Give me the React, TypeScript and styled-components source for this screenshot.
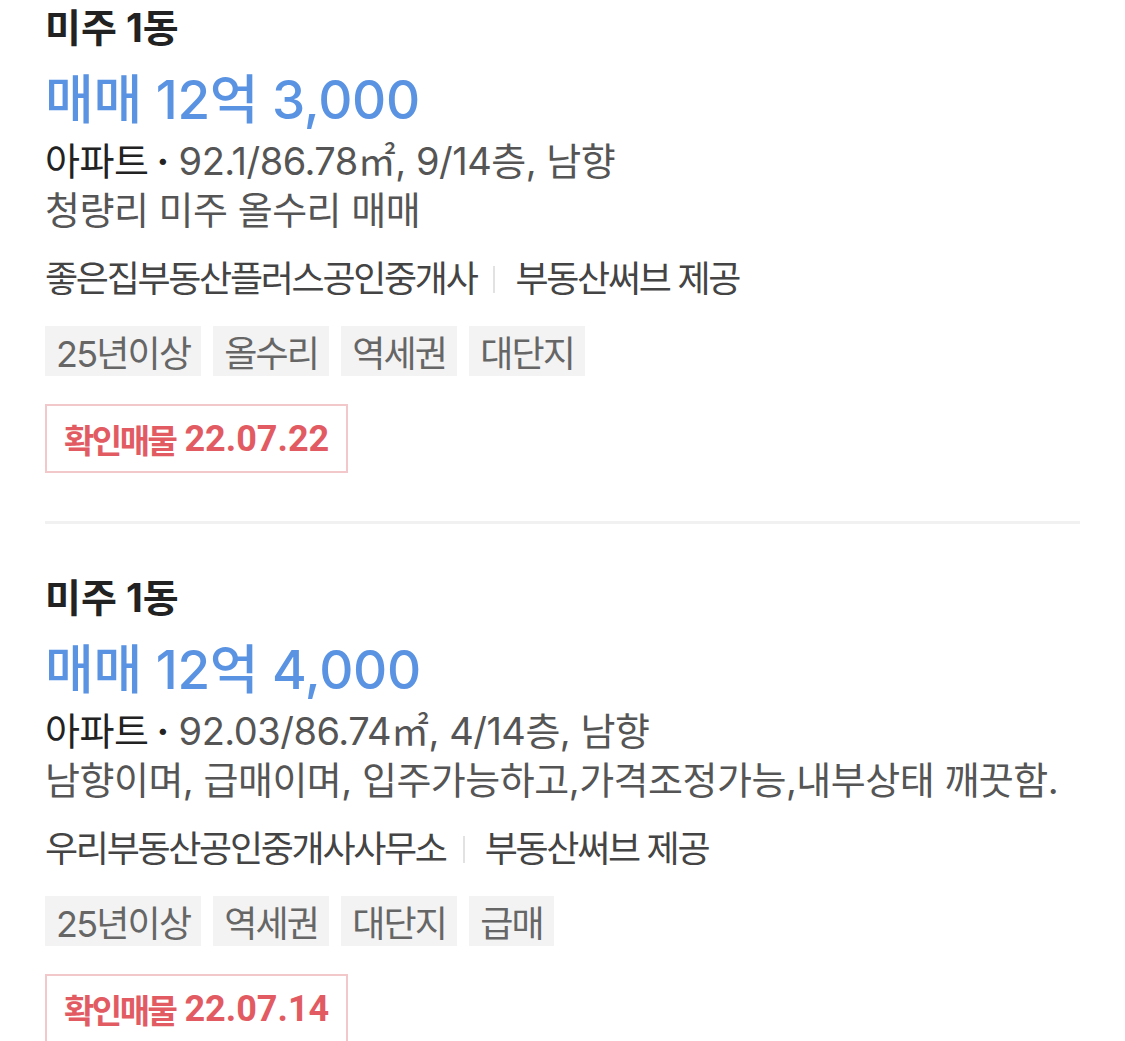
import React from "react";
import styled, { createGlobalStyle } from "styled-components";

const GlobalStyle = createGlobalStyle`
  html, body {
    margin: 0;
    padding: 0;
    background: #ffffff;
  }
  body {
    font-family: Inter, "Noto Sans CJK KR", "Noto Sans", sans-serif;
    -webkit-font-smoothing: antialiased;
  }
`;

const List = styled.ul`
  list-style: none;
  margin: 0;
  padding: 0 45px;
`;

const Item = styled.li`
  display: flex;
  flex-direction: column;
  align-items: flex-start;
  padding: 46px 0 48px;
  border-bottom: 3px solid #f1f1f1;
  &:first-child {
    padding-top: 0;
  }
`;

const Title = styled.h3`
  margin: 0;
  font-size: 39px;
  line-height: 56px;
  font-weight: 700;
  color: #222222;
  letter-spacing: 0;
`;

const Price = styled.div`
  margin-top: 8px;
  font-size: 53px;
  line-height: 72px;
  font-weight: 500;
  color: #5b93e3;
  letter-spacing: -0.3px;
`;

const Info = styled.div`
  margin-top: 1px;
  font-size: 38px;
  line-height: 48px;
  color: #555555;
  letter-spacing: -0.5px;
  white-space: nowrap;
`;

const Strong = styled.span`
  color: #222222;
`;

const Dot = styled.span`
  color: #222222;
  font-weight: 700;
  margin: 0 10px 0 8px;
`;

const Broker = styled.div`
  display: flex;
  align-items: center;
  margin-top: 21px;
  font-size: 36px;
  line-height: 48px;
  color: #444444;
  letter-spacing: -2.3px;
`;

const Divider = styled.span`
  display: inline-block;
  width: 2px;
  height: 27px;
  background: #e2e2e2;
  margin: 0 20px 0 17px;
`;

const Tags = styled.div`
  display: flex;
  gap: 12px;
  margin-top: 23px;
`;

const Tag = styled.span`
  display: inline-flex;
  align-items: center;
  height: 50px;
  padding: 0 11px;
  background: #f3f3f3;
  color: #666666;
  font-size: 36px;
  letter-spacing: -1.8px;
`;

const Badge = styled.div`
  display: inline-flex;
  align-items: center;
  box-sizing: border-box;
  height: 69px;
  margin-top: 28px;
  padding: 0 17px;
  border: 2px solid #f3c8ca;
  color: #e25b62;
  font-size: 33px;
  font-weight: 700;
  letter-spacing: -2.5px;
`;

const Date = styled.span`
  margin-left: 9px;
  font-family: Roboto, "Noto Sans CJK KR", sans-serif;
  font-size: 36px;
  letter-spacing: 0;
`;

type Listing = {
  name: string;
  price: string;
  area: string;
  desc: string;
  agent: string;
  provider: string;
  tags: string[];
  date: string;
};

const listings: Listing[] = [
  {
    name: "미주 1동",
    price: "매매 12억 3,000",
    area: "92.1/86.78㎡, 9/14층, 남향",
    desc: "청량리 미주 올수리 매매",
    agent: "좋은집부동산플러스공인중개사",
    provider: "부동산써브 제공",
    tags: ["25년이상", "올수리", "역세권", "대단지"],
    date: "22.07.22",
  },
  {
    name: "미주 1동",
    price: "매매 12억 4,000",
    area: "92.03/86.74㎡, 4/14층, 남향",
    desc: "남향이며, 급매이며, 입주가능하고,가격조정가능,내부상태 깨끗함.",
    agent: "우리부동산공인중개사사무소",
    provider: "부동산써브 제공",
    tags: ["25년이상", "역세권", "대단지", "급매"],
    date: "22.07.14",
  },
];

export default function App() {
  return (
    <>
      <GlobalStyle />
      <List>
        {listings.map((l, i) => (
          <Item key={i}>
            <Title>{l.name}</Title>
            <Price>{l.price}</Price>
            <Info>
              <Strong>아파트</Strong>
              <Dot>·</Dot>
              {l.area}
            </Info>
            <Info>{l.desc}</Info>
            <Broker>
              {l.agent}
              <Divider />
              {l.provider}
            </Broker>
            <Tags>
              {l.tags.map((t) => (
                <Tag key={t}>{t}</Tag>
              ))}
            </Tags>
            <Badge>
              확인매물<Date>{l.date}</Date>
            </Badge>
          </Item>
        ))}
      </List>
    </>
  );
}
